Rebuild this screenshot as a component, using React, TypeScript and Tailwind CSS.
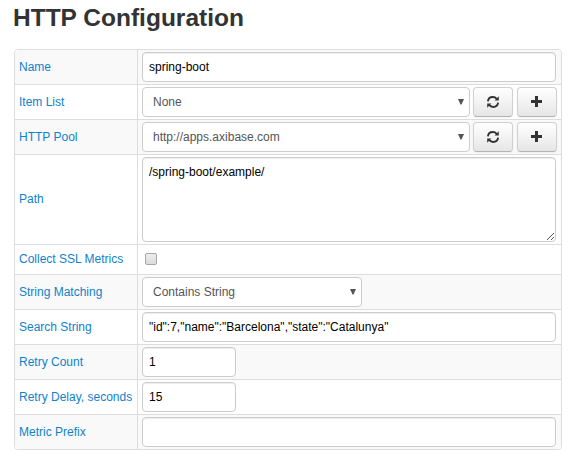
import type { ReactNode } from 'react';

const field =
  'block h-[30px] rounded border border-[#ccc] bg-white px-1.5 text-xs text-black outline-none shadow-[inset_0_1px_1px_rgba(0,0,0,0.075)]';

function Row({ label, striped, height = 'h-[34px]', labelPad = '', children }: { label: string; striped?: boolean; height?: string; labelPad?: string; children: ReactNode }) {
  return (
    <div className={`box-content flex border-b border-[#ddd] last:border-b-0 ${height} ${striped ? 'bg-[#f9f9f9]' : 'bg-white'}`}>
      <div className={`flex w-[123px] shrink-0 items-center border-r border-[#ddd] pl-1 text-xs whitespace-nowrap text-[#0f82ca] ${labelPad}`}>
        {label}
      </div>
      <div className="flex flex-1 items-center gap-1 pl-1">{children}</div>
    </div>
  );
}

function Select({ value, width }: { value: string; width: string }) {
  return (
    <div className={`flex h-[30px] items-center justify-between rounded border border-[#ccc] bg-white pr-[5px] pl-2.5 text-xs text-[#555] ${width}`}>
      <span>{value}</span>
      <svg width="6" height="6" viewBox="0 0 6 6" fill="#555">
        <path d="M0 0h6L3.5 5.5h-1z" />
      </svg>
    </div>
  );
}

function Button({ label, children }: { label: string; children: ReactNode }) {
  return (
    <button
      aria-label={label}
      className="flex h-[30px] w-10 shrink-0 items-center justify-center rounded border border-[#d0d0d0] border-b-[#b3b3b3] bg-linear-to-b from-white to-[#e6e6e6] shadow-[inset_0_1px_0_rgba(255,255,255,0.2),0_1px_2px_rgba(0,0,0,0.05)]"
    >
      {children}
    </button>
  );
}

function Refresh() {
  return (
    <svg width="14" height="14" viewBox="0 0 14 14" fill="none" stroke="#333" strokeWidth="1.9">
      <path d="M1.9 6.3C2.2 3.6 4.3 2 6.8 2c1.6 0 3 .7 3.9 1.8M12.1 7.7c-.3 2.7-2.4 4.3-4.9 4.3-1.6 0-3-.7-3.9-1.8" />
      <path d="M12.8 1.2v4.2H8.6zM1.2 12.8V8.6h4.2z" fill="#333" stroke="none" />
    </svg>
  );
}

function Plus() {
  return (
    <svg width="14" height="14" viewBox="0 0 14 14" fill="#333">
      <path d="M5 1h3v4h4v3H8v4H5V8H1V5h4z" />
    </svg>
  );
}

function PoolControls({ value }: { value: string }) {
  return (
    <>
      <Select value={value} width="w-[328px] mr-[-1px]" />
      <Button label="Refresh"><Refresh /></Button>
      <Button label="Add"><Plus /></Button>
    </>
  );
}

export default function App() {
  return (
    <main className="h-[457px] w-[574px] overflow-hidden bg-white pl-[13px] font-['Liberation_Sans',Arial,sans-serif]">
      <h1 className="h-[49px] pt-px text-[24.5px] leading-[34px] font-bold text-[#333]">HTTP Configuration</h1>
      <div className="ml-px w-[548px] overflow-hidden rounded border border-[#ddd]">
        <Row label="Name" striped>
          <input className={`${field} w-[414px]`} defaultValue="spring-boot" />
        </Row>
        <Row label="Item List"><PoolControls value="None" /></Row>
        <Row label="HTTP Pool" striped><PoolControls value="http://apps.axibase.com" /></Row>
        <Row label="Path" height="h-[89px]" labelPad="pb-px">
          <div className="relative">
            <textarea
              className="block h-[85px] w-[414px] resize-none rounded border border-[#ccc] bg-white px-1.5 py-1 text-xs leading-5 text-black shadow-[inset_0_1px_1px_rgba(0,0,0,0.075)] outline-none"
              defaultValue="/spring-boot/example/"
            />
            <svg className="absolute right-[2px] bottom-[2px]" width="7" height="7" viewBox="0 0 7 7" stroke="#555" strokeWidth="1">
              <path d="M0 7L7 0M4 7L7 4" />
            </svg>
          </div>
        </Row>
        <Row label="Collect SSL Metrics" height="h-[29px]" labelPad="pb-px">
          <input
            type="checkbox"
            className="mb-px ml-[3px] size-3 appearance-none rounded-[2px] border border-[#a6a6a6] bg-linear-to-b from-[#ededed] to-[#dcdcdc]"
          />
        </Row>
        <Row label="String Matching" striped><Select value="Contains String" width="w-[220px]" /></Row>
        <Row label="Search String">
          <input className={`${field} w-[414px]`} defaultValue={'"id":7,"name":"Barcelona","state":"Catalunya"'} />
        </Row>
        <Row label="Retry Count" striped><input className={`${field} w-[94px]`} defaultValue="1" /></Row>
        <Row label="Retry Delay, seconds"><input className={`${field} w-[94px]`} defaultValue="15" /></Row>
        <Row label="Metric Prefix" striped><input className={`${field} w-[414px]`} /></Row>
      </div>
    </main>
  );
}
